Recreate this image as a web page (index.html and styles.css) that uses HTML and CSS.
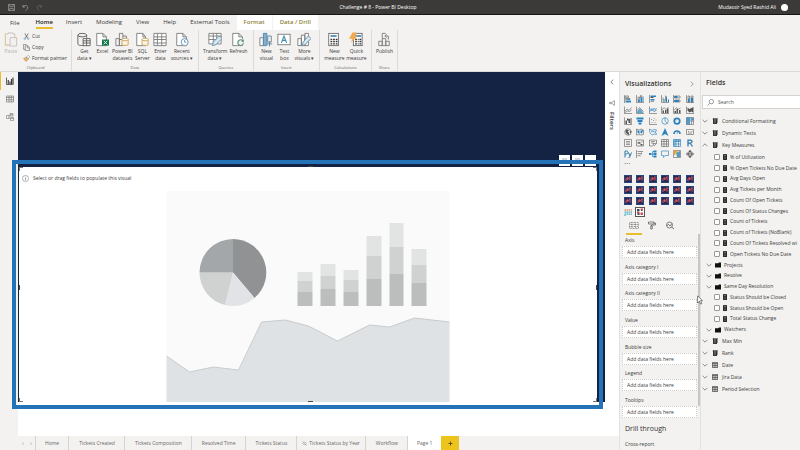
FILE: index.html
```html
<!DOCTYPE html>
<html lang="en">
<head>
<meta charset="utf-8">
<title>Challenge # 8 - Power BI Desktop</title>
<link rel="stylesheet" href="styles.css">
</head>
<body>
<svg class="defs" aria-hidden="true">
  <symbol id="calc" viewBox="0 0 10 12"><rect x="1" width="8" height="12" rx="1" fill="#2b2a29"/><path d="M3 2.5h4M3 6h1M6 6h1M3 9h1M6 9h1" stroke="#d8d6d4" stroke-width="1"/></symbol>
  <symbol id="calcbig" viewBox="0 0 12 12"><path d="M2 1h8v11H2z" fill="#333"/><path d="M1 2h2V0h8v10" fill="none" stroke="#333"/><path d="M4 4h4M4 7h1M7 7h1M4 9.500h1M7 9.500h1" stroke="#e3e1df"/></symbol>
  <symbol id="table" viewBox="0 0 14 12"><rect x=".7" y=".7" width="12.600" height="10.600" fill="#eee" stroke="#2b2a29" stroke-width="1.400"/><path d="M1 2.500h12M1 7h12M5 2v10M9 2v10" stroke="#2b2a29" stroke-width="1.300"/></symbol>
  <symbol id="folder" viewBox="0 0 14 12"><path d="M0 2h8l1-2h5v12H0z" fill="#111"/></symbol>
  <symbol id="down" viewBox="0 0 10 10"><path d="M1 3l4 4 4-4" fill="none" stroke="#666" stroke-width="1.200"/></symbol>
  <symbol id="up" viewBox="0 0 10 10"><path d="M1 7l4-4 4 4" fill="none" stroke="#666" stroke-width="1.200"/></symbol>
  <symbol id="custom" viewBox="0 0 16 16"><rect width="16" height="16" fill="#25477d"/><rect x="2" y="2" width="12" height="12" fill="#26284f"/><path d="M4 12V7l3-2v5l3-4 2-3v8" fill="none" stroke="#d2525f" stroke-width="2"/></symbol>
</svg>

<header class="titlebar">
  <div class="quick">
    <svg viewBox="0 0 16 16"><path d="M1 1h14v14H1zM4 1v5h8V1M4 15v-5h8v5" fill="none" stroke="#aaa" stroke-width="1.500"/></svg>
    <svg viewBox="0 0 16 16"><path d="M2 2v5h5M2 7c4-6 12-4 11 2 0 3-3 4-5 6" fill="none" stroke="#aaa" stroke-width="1.500"/></svg>
    <svg viewBox="0 0 16 16"><path d="M13 2v5H8M13 7C9 1 2 3 3 9c0 3 3 4 5 6" fill="none" stroke="#6a6967" stroke-width="1.500"/></svg>
  </div>
  <h1>Challenge # 8 - Power BI Desktop</h1>
  <div class="user">Mudassir Syed Rashid Ali <span class="avatar"></span></div>
</header>

<nav class="menu">
  <a class="file" href="#">File</a><a class="active" href="#">Home</a><a href="#">Insert</a><a href="#">Modeling</a><a href="#">View</a><a href="#">Help</a><a href="#">External Tools</a><a class="context" href="#">Format</a><a class="context" href="#">Data / Drill</a>
</nav>

<section class="ribbon">
  <div class="group">
    <div class="tools clipboard">
      <button class="faded"><svg viewBox="0 0 14 16"><path d="M1 2h3V1h5v1h2v4M1 2v12h5M6 6h7v9H6z" fill="none" stroke="#c5c2bd"/><path d="M1 2v12h4" fill="none" stroke="#dfc99b"/></svg>Paste</button>
      <div class="stack">
        <button><svg viewBox="0 0 16 16"><path d="M4 1l7 11M12 1L5 12" fill="none" stroke="#444" stroke-width="1.500"/><circle cx="4" cy="13" r="2" fill="none" stroke="#4c87b5"/><circle cx="12" cy="13" r="2" fill="none" stroke="#4c87b5"/></svg>Cut</button>
        <button><svg viewBox="0 0 16 16"><path d="M5 12H1V1h6l2 2M5 4h6l4 4v7H5zM10 4v5h5" fill="none" stroke="#555" stroke-width="1.200"/></svg>Copy</button>
        <button><svg viewBox="0 0 16 16"><path d="M1 8l7-3 4 5-5 5z" fill="#e5b567" stroke="#9e7a45"/><path d="M8 5l4-4 3 3-3 5z" fill="#fff" stroke="#555"/></svg>Format painter</button>
      </div>
    </div>
    <h2>Clipboard</h2>
  </div>
  <div class="group">
    <div class="tools">
      <button class="s"><svg viewBox="0 0 16 16"><path d="M1 3v10c0 2 5 2 7 2M11 3v3" fill="none" stroke="#555"/><ellipse cx="6" cy="3" rx="5" ry="2" fill="none" stroke="#555"/><path d="M7 7h8v8H7zM7 9.500h8M7 12h8M11 7v8" fill="#fff" stroke="#555"/></svg>Get<br>data ▾</button>
      <button class="s"><svg viewBox="0 0 16 16"><path d="M2 1h7l4 4v10H2zM9 1v4h4" fill="#fff" stroke="#777"/><rect x="8" y="8" width="8" height="7" fill="#157a4b"/><path d="M10 9.500l4 4M14 9.500l-4 4" stroke="#fff"/></svg>Excel</button>
      <button class="m"><svg viewBox="0 0 16 16"><path d="M1 7h4v8H1zM5 1h4v7H5zM5 8h4v7H5zM9 4h4v5" fill="none" stroke="#777"/><path d="M8 8v6c1 1 6 1 7 0V8" fill="#fff4df" stroke="#c79b55"/><ellipse cx="11.500" cy="8" rx="3.500" ry="1.500" fill="#fff" stroke="#c79b55"/></svg>Power BI<br>datasets</button>
      <button class="s"><svg viewBox="0 0 16 16"><path d="M2 1h7l3 4v10H2zM9 1v4h3" fill="#fff" stroke="#777"/><path d="M8 8v6c1 1 6 1 7 0V8" fill="#fff4df" stroke="#c79b55"/><ellipse cx="11.500" cy="8" rx="3.500" ry="1.500" fill="#fff" stroke="#c79b55"/></svg>SQL<br>Server</button>
      <button class="s"><svg viewBox="0 0 16 16"><path d="M1 1h14v14H1zM1 5h14M1 8h14M1 12h14M5 1v14M10 1v14" fill="#fff" stroke="#777"/></svg>Enter<br>data</button>
      <button class="l"><svg viewBox="0 0 16 16"><path d="M2 1h7l4 4v10H2zM9 1v4h4" fill="#fff" stroke="#777"/><circle cx="11" cy="11" r="4" fill="#fff" stroke="#5d8cb8"/><path d="M11 8.500V11h2" fill="none" stroke="#5d8cb8"/></svg>Recent<br>sources ▾</button>
    </div>
    <h2>Data</h2>
  </div>
  <div class="group">
    <div class="tools">
      <button class="l"><svg viewBox="0 0 16 16"><path d="M1 1h14v12H1zM1 4h14M1 8h14M6 1v12M10 1v12" fill="#fff" stroke="#777"/><path d="M5 15l1-4 7-7 3 3-7 7z" fill="#d7e8f2" stroke="#5d8ca8"/></svg>Transform<br>data ▾</button>
      <button class="m"><svg viewBox="0 0 16 16"><path d="M2 1h7l4 4v10H2zM9 1v4h4" fill="#fff" stroke="#777"/><circle cx="11" cy="11" r="4" fill="#f3f2f0"/><path d="M8 13c-1-5 4-6 6-3V8M14 10h-2M14 12c0 3-4 4-6 1" fill="none" stroke="#56937a" stroke-width="1.200"/></svg>Refresh</button>
    </div>
    <h2>Queries</h2>
  </div>
  <div class="group">
    <div class="tools">
      <button class="s"><svg viewBox="0 0 16 16"><path d="M1 6h4v9H1z" fill="#fff" stroke="#777"/><path d="M5 1h4v14H5z" fill="#80afd0" stroke="#4e86ad"/><path d="M10 4h4v7h-4zM12 10v6M9 13h6" fill="none" stroke="#5f7f96"/></svg>New<br>visual</button>
      <button class="s"><svg viewBox="0 0 16 16"><rect x="1" y="2" width="14" height="12" fill="#fff" stroke="#777"/><path d="M5 12l3-8 3 8M6 9h4" fill="none" stroke="#3e8db0" stroke-width="1.200"/></svg>Text<br>box</button>
      <button class="m"><svg viewBox="0 0 16 16"><path d="M1 7h4v8H1zM5 3h4v12H5zM9 1h4v14H9z" fill="#fff" stroke="#777"/><path d="M6 15l1-4 6-7 3 3-7 7z" fill="#d7e8f2" stroke="#5d8ca8"/></svg>More<br>visuals ▾</button>
    </div>
    <h2>Insert</h2>
  </div>
  <div class="group">
    <div class="tools">
      <button class="m"><svg viewBox="0 0 16 16"><rect x="2" y="1" width="11" height="14" fill="#fff" stroke="#666"/><path d="M4 4h7" stroke="#4e8ab5" stroke-width="2"/><path d="M4 8h2M7 8h2M10 8h2M4 10.500h2M7 10.500h2M10 10.500h2M4 13h2M7 13h2M10 13h2" stroke="#333" stroke-width="1.500"/></svg>New<br>measure</button>
      <button class="m"><svg viewBox="0 0 16 16"><rect x="5" y="1" width="10" height="14" fill="#fff" stroke="#666"/><path d="M7 4h7" stroke="#4e8ab5" stroke-width="2"/><path d="M7 8h2M10 8h1M12 8h2M7 10.500h2M10 10.500h1M12 10.500h2M7 13h2M10 13h1M12 13h2" stroke="#333" stroke-width="1.500"/><path d="M4 0h5L7 4h3l-8 8 2-5H0z" fill="#f0a94c"/></svg>Quick<br>measure</button>
    </div>
    <h2>Calculations</h2>
  </div>
  <div class="group">
    <div class="tools">
      <button class="s"><svg viewBox="0 0 16 16"><path d="M2 10h4v5H2zM6 7h4v8H6zM10 10h4v5h-4zM6 7V1h4M13 8V4H9l2-2M9 4l2 2" fill="none" stroke="#777"/></svg>Publish</button>
    </div>
    <h2>Share</h2>
  </div>
</section>

<div class="workspace">
  <div class="editor">
    <div class="stage">
      <nav class="rail">
        <a class="active" href="#" aria-label="Report"><svg viewBox="0 0 16 16"><path d="M1 1v14h14" fill="none" stroke="#333" stroke-width="1.500"/><path d="M4.500 6v8M8 9v5M11 4v10M14 1v13" stroke="#333" stroke-width="2.200"/></svg></a>
        <a href="#" aria-label="Data"><svg viewBox="0 0 16 16"><path d="M1 2h14v12H1zM1 5h14M1 9.500h14M6 2v12M10.500 2v12" fill="none" stroke="#666" stroke-width="1.200"/></svg></a>
        <a href="#" aria-label="Model"><svg viewBox="0 0 16 16"><path d="M1 5h5v6H1zM8 1h6v5H8zM9 9h6v6H9zM6 7l2-3M6 9l3 3M8 3h6M9 11h6" fill="none" stroke="#777" stroke-width="1.200"/></svg></a>
      </nav>
      <main class="canvas">
        <div class="report">
          <article class="visual">
            <div class="actions"><i></i><i></i><i></i></div>
            <p><svg viewBox="0 0 16 16"><circle cx="8" cy="8" r="7" fill="none" stroke="#555"/><path d="M8 7v5M8 4v1.500" stroke="#555" stroke-width="1.300"/></svg>Select or drag fields to populate this visual</p>
            <svg class="art" viewBox="0 0 283 211">
              <rect width="283" height="211" fill="#fafafa"/>
              <path d="M0 165l23 16 24-5 25 3 23-48 24-2 23 6 29 15 32-16 20 2 25-9 35 4v80H0z" fill="#dfe2e4"/>
              <path d="M0 165l23 16 24-5 25 3 23-48 24-2 23 6 29 15 32-16 20 2 25-9 35 4" fill="none" stroke="#c9cbcc"/>
              <path d="M66.500 81.500v-33.500a33.500 33.500 0 0 1 21.500 59z" fill="#909294"/>
              <path d="M66.500 81.500L88 107a33.500 33.500 0 0 1-29.500 7z" fill="#e1e3e6"/>
              <path d="M66.500 81.500l-8 32.500A33.500 33.500 0 0 1 33 81.500z" fill="#d0d2d2"/>
              <path d="M66.500 81.500H33A33.500 33.500 0 0 1 66.500 48z" fill="#a4a7a9"/>
              <path d="M131 81h15v9h-15zM154 73h15v12h-15zM177 79h15v10h-15zM200 45h15v20h-15zM223 32h14v24h-14zM245 58h15v16h-15z" fill="#e2e3e3"/>
              <path d="M131 90h15v11h-15zM154 85h15v13h-15zM177 89h15v12h-15zM200 65h15v23h-15zM223 56h14v27h-14zM245 74h15v18h-15z" fill="#d0d2d1"/>
              <path d="M131 101h15v14h-15zM154 98h15v17h-15zM177 101h15v14h-15zM200 88h15v27h-15zM223 83h14v32h-14zM245 92h15v23h-15z" fill="#bcbdbd"/>
            </svg>
            <span class="grip t"></span><span class="grip b"></span><span class="grip w"></span><span class="grip e"></span>
            <span class="corner nw"></span><span class="corner ne"></span><span class="corner sw"></span><span class="corner se"></span>
            <span class="highlight"></span>
          </article>
        </div>
      </main>
      <aside class="filters">
        <svg viewBox="0 0 10 10"><path d="M7 1L3 5l4 4" fill="none" stroke="#555" stroke-width="1.200"/></svg>
        <svg viewBox="0 0 10 10"><path d="M9 1v8L5 6H1V4h4z" fill="none" stroke="#666"/></svg>
        <h2>Filters</h2>
      </aside>
    </div>
    <nav class="pages">
      <button class="step">‹</button><button class="step">›</button>
      <a href="#">Home</a><a href="#">Tickets Created</a><a href="#">Tickets Composition</a><a href="#">Resolved Time</a><a href="#">Tickets Status</a><a class="hidden-page" href="#"><svg viewBox="0 0 12 12"><path d="M1 6c2-4 8-4 10 0-2 4-8 4-10 0M1 1l10 10" fill="none" stroke="#777"/></svg>Tickets Status by Year</a><a href="#">Workflow</a><a class="active" href="#">Page 1</a><button class="add" aria-label="New page"><svg viewBox="0 0 10 10"><path d="M5 1v8M1 5h8" stroke="#5a4a10" stroke-width="1.800"/></svg></button>
    </nav>
  </div>

  <aside class="viz">
    <header><h2>Visualizations</h2><svg viewBox="0 0 10 10"><path d="M3 1l4 4-4 4" fill="none" stroke="#666"/></svg></header>
    <div class="gallery">
      <svg viewBox="0 0 16 16"><path class="g" d="M1 0v16M3 2h6v3H3zM3 7h9v2H3z"/><path class="f" d="M3 11h11v4H3zM7 7h5v2H7z"/></svg>
      <svg viewBox="0 0 16 16"><path class="g" d="M1 0v15h15M4 4h3v9H4zM9 1h2v5H9z"/><path class="f" d="M4 9h3v5H4zM9 6h3v8H9zM13 3h2v11h-2z"/></svg>
      <svg viewBox="0 0 16 16"><path class="g" d="M1 0v16M3 13h7"/><path class="f" d="M3 1h11v3H3zM3 8h8v3H3z"/><path class="d" d="M3 4h6v2H3z"/></svg>
      <svg viewBox="0 0 16 16"><path class="g" d="M1 0v15h15M4 5v8M9 1v12"/><path class="f" d="M5 8h2v6H5zM10 3h2v11h-2zM14 9h2v5h-2z"/></svg>
      <svg viewBox="0 0 16 16"><path class="g" d="M1 0v16M3 2h11v4H3zM3 10h11v4H3z"/><path class="f" d="M3 2h6v4H3zM3 10h9v4H3z"/></svg>
      <svg viewBox="0 0 16 16"><path class="g" d="M1 0v15h15M4 2h3v12H4zM10 2h4v12h-4z"/><path class="f" d="M4 7h3v7H4zM10 5h4v9h-4z"/></svg>

      <svg viewBox="0 0 16 16"><path class="g" d="M1 1v14h15M2 10l4-4 4 3 5-6M2 13l5-3 4 1 4-3"/></svg>
      <svg viewBox="0 0 16 16"><path class="g" d="M1 1v14h15M2 9l5-6 8 8"/><path class="f" d="M2 11l5-6 4 3 4 6H2z" opacity=".7"/></svg>
      <svg viewBox="0 0 16 16"><path class="g" d="M1 1v14h15"/><path class="b" d="M2 5l4 5 4-6 5 6M2 11l4-6 5 7 4-8"/></svg>
      <svg viewBox="0 0 16 16"><path class="g" d="M1 1v14h15M2 8l4-5 4 4 5-5"/><path class="d" d="M3 9h3v5H3zM8 8h3v6H8zM12 5h3v9h-3z"/></svg>
      <svg viewBox="0 0 16 16"><path class="g" d="M1 1v14h15M2 9l5-6 3 4 5-3"/><path class="d" d="M3 10h3v4H3zM7 6h3v8H7zM12 8h3v6h-3z"/></svg>
      <svg viewBox="0 0 16 16"><path class="g" d="M1 1v14h15"/><path class="d" d="M3 3l4 3 4-2 4-2v12l-4-3-4 2-4-4z"/></svg>

      <svg viewBox="0 0 16 16"><path class="g" d="M1 1v14h15"/><path class="d" d="M3 7h3v7H3zM6 3h3v4H6zM9 4h3v8H9zM13 2h2v12h-2z"/></svg>
      <svg viewBox="0 0 16 16"><path class="f" d="M1 1h14v4H1zM3 6h10v4H3zM5 11h6v4H5z"/></svg>
      <svg viewBox="0 0 16 16"><path class="g" d="M1 1v14h15M4 5h2M9 3h2M13 6h2M5 11h2M11 11h2M8 7h2"/></svg>
      <svg viewBox="0 0 16 16"><circle class="b" cx="8" cy="8" r="6.500"/><path class="b" d="M8 1v7l5 5"/></svg>
      <svg viewBox="0 0 16 16"><circle cx="8" cy="8" r="5.500" fill="none" stroke="#2b83bd" stroke-width="3.500"/><path class="g" d="M2 3l4 4"/></svg>
      <svg viewBox="0 0 16 16"><path class="g" d="M1 1h14v14H1zM8 8h7M11 8v7"/><path class="f" d="M1 1h7v14H1zM9 2h6v5H9z" opacity=".8"/></svg>

      <svg viewBox="0 0 16 16"><circle class="g" cx="8" cy="8" r="6.500"/><path class="d" d="M4 3l6 1-3 4 3 1v5l-4-2-3-4zM11 5l4 2-2 4z"/></svg>
      <svg viewBox="0 0 16 16"><path class="g" d="M1 2l5 2 4-2 5 2v9l-5 1-4-1-5 1z"/><path class="f" d="M3 4l4 2v6l-4-3zM9 5l5-1-2 7-3-1z"/></svg>
      <svg viewBox="0 0 16 16"><path class="b" d="M1 2l5 3 4-2 5 1-2 4 2 5-5-1-4 2-3-3-2-4zM4 8l4-1 5 1"/></svg>
      <svg viewBox="0 0 16 16"><path class="f" d="M8 0l7 16-7-4-7 4z"/></svg>
      <svg viewBox="0 0 16 16"><path d="M2 12a6 6 0 0 1 12 0" fill="none" stroke="#2b83bd" stroke-width="3"/><path class="g" d="M8 12l2-5"/></svg>
      <svg viewBox="0 0 16 16"><path class="g" d="M1 3h14v10H1zM4 7h2M8 7h1M11 7h2M4 10h8"/></svg>

      <svg viewBox="0 0 16 16"><path class="g" d="M1 1h14v14H1zM4 5h8M4 8h8M4 11h8"/></svg>
      <svg viewBox="0 0 16 16"><path class="g" d="M1 2h14v12H1zM3 6l4 4 6-6"/><path class="d" d="M3 9l3-4 3 4zM9 10h4v3H9z"/></svg>
      <svg viewBox="0 0 16 16"><path class="g" d="M1 2h14v7M1 2v12h7M4 5h8M4 8h5M8 9h7l-5 5z"/></svg>
      <svg viewBox="0 0 16 16"><path class="g" d="M1 1h14v14H1zM1 5h14M1 10h14M6 1v14M11 1v14"/></svg>
      <svg viewBox="0 0 16 16"><path class="f" d="M1 1h14v4H1zM1 5h4v10H1z" opacity=".5"/><path class="b" d="M1 1h14v14H1zM1 5h14M1 10h14M6 1v14M11 1v14"/></svg>
      <svg viewBox="0 0 16 16"><path d="M4 15V2h5c4 0 4 6 0 6H4M8 8l5 7" fill="none" stroke="#2b78ad" stroke-width="2.500"/></svg>

      <svg viewBox="0 0 16 16"><path d="M2 15V2h3c4 0 4 6 0 6H2M9 5l3 7M15 5l-4 10H9" fill="none" stroke="#2b78ad" stroke-width="2"/></svg>
      <svg viewBox="0 0 16 16"><path class="g" d="M1 0v16M3 3h11M3 7h7M3 11h4M11 5v4M8 9v4"/></svg>
      <svg viewBox="0 0 16 16"><path class="f" d="M0 6h5v4H0zM9 1h6v4H9zM9 6h6v4H9zM9 11h6v4H9z"/><path class="b" d="M5 8h4M7 3v10M7 3h3M7 13h3"/></svg>
      <svg viewBox="0 0 16 16"><path class="b" d="M1 2h14v9H8l-3 4v-4H1z"/></svg>
      <svg viewBox="0 0 16 16"><path class="g" d="M1 1h14v14H1z"/><path class="f" d="M6 5l8-3v12H8z" opacity=".8"/><path d="M1 1h8v5H5v4H1z" fill="#e5a34d"/></svg>
      <svg viewBox="0 0 16 16"><path d="M8 1l7 7-7 7-7-7zM8 1l-3 7 3 7 3-7zM1 8h14" fill="none" stroke="#333" stroke-width="1.300"/></svg>
    </div>
    <p class="more">···</p>
    <div class="gallery custom">
      <svg><use href="#custom"/></svg><svg><use href="#custom"/></svg><svg><use href="#custom"/></svg><svg><use href="#custom"/></svg><svg><use href="#custom"/></svg><svg><use href="#custom"/></svg>
      <svg><use href="#custom"/></svg><svg><use href="#custom"/></svg><svg><use href="#custom"/></svg><svg><use href="#custom"/></svg><svg><use href="#custom"/></svg><svg><use href="#custom"/></svg>
      <svg><use href="#custom"/></svg><svg><use href="#custom"/></svg><svg><use href="#custom"/></svg><svg><use href="#custom"/></svg><svg><use href="#custom"/></svg><svg><use href="#custom"/></svg>
      <svg viewBox="0 0 16 16"><path d="M1 4h3M5 4h3M9 4h3M13 4h3" stroke="#e0a070" stroke-width="3"/><path d="M1 8h3M5 8h3M9 8h3M13 8h3M1 12h3M5 12h3M9 12h3M13 12h3M2 14v2" stroke="#4bacc0" stroke-width="2.500"/></svg>
      <svg class="picked" viewBox="0 0 16 16"><rect width="16" height="16" fill="#fff"/><path d="M2 2h5v5H2zM10 3h3v3h-3zM3 10h4v4H3z" fill="#3d4250"/><path d="M9 1h5v3H9zM2 8h5v3H2zM9 9h5v5H9z" fill="#c94f55"/></svg>
    </div>
    <div class="modes">
      <button class="active" aria-label="Fields"><svg viewBox="0 0 20 16"><path d="M1 2h18v12H1zM1 6h18M1 10h18M6 2v12M13 2v12" fill="none" stroke="#444" stroke-dasharray="2 1"/></svg></button>
      <button aria-label="Format"><svg viewBox="0 0 20 16"><path d="M3 1h11v4H3zM14 3h3v4H9v2M7.500 9h3v6h-3z" fill="none" stroke="#444" stroke-width="1.300"/></svg></button>
      <button aria-label="Analytics"><svg viewBox="0 0 20 16"><circle cx="9" cy="7" r="6" fill="none" stroke="#444" stroke-width="1.300"/><path d="M13 11l5 4M4 8l3-2 3 3 4-5" fill="none" stroke="#444" stroke-width="1.500"/></svg></button>
    </div>
    <div class="wells">
      <div><h3 id="w1">Axis</h3><button aria-describedby="w1">Add data fields here</button></div>
      <div><h3 id="w2">Axis category I</h3><button aria-describedby="w2">Add data fields here</button></div>
      <div><h3 id="w3">Axis category II</h3><button aria-describedby="w3">Add data fields here</button></div>
      <div><h3 id="w4">Value</h3><button aria-describedby="w4">Add data fields here</button></div>
      <div><h3 id="w5">Bubble size</h3><button aria-describedby="w5">Add data fields here</button></div>
      <div><h3 id="w6">Legend</h3><button aria-describedby="w6">Add data fields here</button></div>
      <div><h3 id="w7">Tooltips</h3><button aria-describedby="w7">Add data fields here</button></div>
    </div>
    <div class="drill"><h2>Drill through</h2><p>Cross-report</p></div>
    <span class="scrollbar"></span>
    <svg class="cursor" viewBox="0 0 10 16"><path d="M1 1v12l3-3 2 5 2-1-2-5h3z" fill="#fff" stroke="#333"/></svg>
  </aside>

  <aside class="fields">
    <h2>Fields</h2>
    <label class="search"><svg viewBox="0 0 16 16"><circle cx="10" cy="6" r="5" fill="none" stroke="#555" stroke-width="1.300"/><path d="M6 10l-5 5" stroke="#555" stroke-width="1.300"/></svg><input type="text" placeholder="Search" aria-label="Search"></label>
    <div class="tree">
      <div class="row"><svg><use href="#down"/></svg><svg><use href="#calcbig"/></svg>Conditional Formatting</div>
      <div class="row"><svg><use href="#down"/></svg><svg><use href="#calcbig"/></svg>Dynamic Texts</div>
      <div class="row"><svg><use href="#up"/></svg><svg><use href="#calcbig"/></svg>Key Measures</div>
      <div class="nested">
        <label><input type="checkbox"><svg><use href="#calc"/></svg>% of Utilization</label>
        <label><input type="checkbox"><svg><use href="#calc"/></svg>% Open Tickets No Due Date</label>
        <label><input type="checkbox"><svg><use href="#calc"/></svg>Avg Days Open</label>
        <label><input type="checkbox"><svg><use href="#calc"/></svg>Avg Tickets per Month</label>
        <label><input type="checkbox"><svg><use href="#calc"/></svg>Count Of Open Tickets</label>
        <label><input type="checkbox"><svg><use href="#calc"/></svg>Count Of Status Changes</label>
        <label><input type="checkbox"><svg><use href="#calc"/></svg>Count of Tickets</label>
        <label><input type="checkbox"><svg><use href="#calc"/></svg>Count of Tickets (NoBlank)</label>
        <label><input type="checkbox"><svg><use href="#calc"/></svg>Count Of Tickets Resolved wi</label>
        <label><input type="checkbox"><svg><use href="#calc"/></svg>Open Tickets No Due Date</label>
        <div class="folder"><svg><use href="#down"/></svg><svg><use href="#folder"/></svg>Projects</div>
        <div class="folder"><svg><use href="#down"/></svg><svg><use href="#folder"/></svg>Resolve</div>
        <div class="folder"><svg><use href="#down"/></svg><svg><use href="#folder"/></svg>Same Day Resolution</div>
        <label><input type="checkbox"><svg><use href="#calc"/></svg>Status Should be Closed</label>
        <label><input type="checkbox"><svg><use href="#calc"/></svg>Status Should be Open</label>
        <label><input type="checkbox"><svg><use href="#calc"/></svg>Total Status Change</label>
        <div class="folder"><svg><use href="#down"/></svg><svg><use href="#folder"/></svg>Watchers</div>
      </div>
      <div class="row"><svg><use href="#down"/></svg><svg><use href="#calcbig"/></svg>Max Min</div>
      <div class="row"><svg><use href="#down"/></svg><svg><use href="#calcbig"/></svg>Rank</div>
      <div class="row"><svg><use href="#down"/></svg><svg><use href="#table"/></svg>Date</div>
      <div class="row"><svg><use href="#down"/></svg><svg><use href="#table"/></svg>Jira Data</div>
      <div class="row"><svg><use href="#down"/></svg><svg><use href="#table"/></svg>Period Selection</div>
    </div>
  </aside>
</div>
</body>
</html>
```
FILE: styles.css
```css
* { box-sizing: border-box; margin: 0; padding: 0; }
body {
  display: flex;
  flex-direction: column;
  height: 100vh;
  overflow: hidden;
  background: #f3f2f0;
  color: #3a3a3a;
  font: 5px/7px "Open Sans", "Noto Sans", sans-serif;
}
button, input { font: inherit; color: inherit; background: none; border: 0; }
a { color: inherit; text-decoration: none; }
svg { display: block; flex: none; }
h2, h3 { font-weight: 400; }
.defs { position: absolute; width: 0; height: 0; }

/* Title bar */
.titlebar {
  display: grid;
  grid-template-columns: 1fr auto 1fr;
  align-items: center;
  height: 15px;
  padding: 0 12px 0 8px;
  background: #3b3a38;
  border-bottom: 1px solid #161514;
  color: #fff;
}
.titlebar h1 { font-size: 5px; font-weight: 400; margin-right: 40px; }
.quick { display: flex; gap: 7px; }
.quick svg { width: 7px; height: 7px; }
.user { display: flex; justify-content: flex-end; align-items: center; gap: 5px; }
.avatar { width: 7px; height: 7px; border-radius: 50%; background: #fff; }

/* Ribbon tabs */
.menu { display: flex; height: 15px; padding-left: 3px; font-size: 6px; line-height: 14px; }
.menu a { padding: 0 7px; }
.menu .file { padding-right: 9px; line-height: 16px; }
.menu .active { padding-right: 6px; font-weight: 600; color: #222; }
.menu .active::after { content: ""; display: block; height: 2px; margin-top: -2px; background: #e9bd2e; }
.menu .context { background: #fff; color: #8d8437; font-weight: 600; border-right: 1px solid #f3f2f0; }

/* Ribbon */
.ribbon { display: flex; height: 42px; border-bottom: 1px solid #dcdad8; }
.group {
  display: flex;
  flex-direction: column;
  justify-content: space-between;
  padding: 2px 4px 0;
  border-right: 1px solid #dddbd8;
}
.group h2 { font-size: 4px; line-height: 7px; text-align: center; color: #666; }
.tools { display: flex; justify-content: center; align-items: flex-start; gap: 1px; }
.tools button { white-space: nowrap; display: block; line-height: 7px; }
.tools > button svg { width: 14px; height: 15px; margin: 0 auto 1px; }
.s { width: 17px; }
.m { width: 21px; }
.l { width: 24px; }
.clipboard { gap: 5px; }
.faded { color: #b5b2ae; }
.stack { display: flex; flex-direction: column; gap: 3px; }
.stack button { display: flex; align-items: center; gap: 2px; line-height: 8px; }
.stack svg { width: 7px; height: 7px; }

/* Workspace */
.workspace { display: flex; flex: 1; min-height: 0; }
.editor { display: flex; flex-direction: column; flex: 1; min-width: 0; }
.stage { display: flex; flex: 1; min-height: 0; }
.rail { width: 18px; }
.rail a { display: grid; place-items: center; height: 18px; border-left: 1px solid transparent; }
.rail .active { border-color: #e9bd2e; }
.rail svg { width: 8px; height: 8px; }
.canvas { display: flex; flex: 1; padding-bottom: 34px; background: #fff; }
.report { display: flex; flex: 1; padding: 95px 8px 0 1px; background: #142344; }
.visual { position: relative; display: flex; flex-direction: column; flex: 1; background: #fff; }
.visual p { display: flex; align-items: center; gap: 4px; height: 24px; padding: 0 0 2px 3px; }
.visual p svg { width: 7px; height: 7px; }
.art { flex: 1; min-height: 0; width: 100%; }
.highlight { position: absolute; inset: -7px -6px -7px -7px; border: 4px solid #2472b8; }
.actions { position: absolute; top: -12px; right: 1px; display: flex; gap: 2px; }
.actions i { width: 11px; height: 11px; border: 3px solid #fff; background: #cdd5e0; }
.actions i:last-child { background: #fff; }
.grip { position: absolute; background: #444; }
.t, .b { left: 50%; width: 5px; height: 1px; }
.t { top: -1px; }
.b { bottom: 0; }
.w, .e { top: 50%; width: 1px; height: 5px; }
.w { left: 0; }
.e { right: 0; }
.corner { position: absolute; width: 4px; height: 4px; border: 0 solid #777; }
.nw { top: 0; left: 0; border-width: 1px 0 0 1px; }
.ne { top: 0; right: 0; border-width: 1px 1px 0 0; }
.sw { bottom: 0; left: 0; border-width: 0 0 1px 1px; }
.se { bottom: 0; right: 0; border-width: 0 1px 1px 0; }

.filters { display: flex; flex-direction: column; align-items: center; width: 14px; padding-top: 7px; background: #fff; }
.filters svg { width: 6px; height: 6px; }
.filters svg + svg { margin-top: 15px; }
.filters h2 { writing-mode: vertical-rl; margin-top: 6px; font-size: 6px; line-height: 8px; font-weight: 600; color: #333; }

/* Page tabs */
.pages { display: flex; height: 14px; padding-left: 19px; line-height: 15px; color: #666; }
.pages a { display: flex; align-items: center; gap: 2px; padding: 0 9px 0 10px; border-right: 1px solid #d5d3d0; white-space: nowrap; }
.pages .step { width: 8px; }
.pages .step + a { padding-left: 9px; border-left: 1px solid #d5d3d0; }
.pages .hidden-page { padding: 0 5px; }
.pages svg { width: 5px; height: 5px; }
.pages .active { padding: 0 9px; background: #fff; border: 0; }
.add { display: grid; place-items: center; width: 18px; background: #ecc41b; }

/* Visualizations */
.viz { position: relative; display: flex; flex-direction: column; width: 82px; border: 1px solid #e3e1df; border-width: 0 1px; }
.viz header { display: flex; justify-content: space-between; align-items: center; padding: 6px 5px 0; height: 17px; }
.viz header svg { width: 6px; height: 6px; }
.viz h2, .fields h2 { font-size: 7px; line-height: 10px; color: #333; }
.viz header h2, .fields h2 { font-weight: 600; }
.gallery { display: grid; grid-template-columns: repeat(6, 1fr); grid-auto-rows: 11px; place-items: center; margin-top: 4px; padding: 0 4px 0 2px; }
.gallery svg { width: 8px; height: 8px; }
.g, .b { fill: none; stroke: #666; stroke-width: 1.300px; }
.gallery .b { stroke: #2b83bd; }
.f { fill: #2b83bd; }
.d { fill: #555; }
.more { padding-left: 4px; font-size: 8px; }
.gallery.custom { margin-top: 7px; }
.gallery .picked { width: 10px; height: 10px; border: 1px solid #555; }
.modes { display: flex; gap: 2px; height: 17px; margin-top: 1px; padding-left: 6px; }
.modes button { display: grid; place-items: center; width: 16px; border-bottom: 2px solid transparent; }
.modes .active { border-color: #e9bd2e; }
.modes svg { width: 10px; height: 9px; }
.wells { display: flex; flex-direction: column; justify-content: space-between; flex: 1; min-height: 0; padding: 1px 3px 0 2px; }
.wells h3 { font-size: 5px; line-height: 8px; padding-left: 3px; }
.wells button { display: block; width: 100%; margin-top: 2px; padding: 0 4px; border: 1px dotted #cfcdca; background: #fff; line-height: 10px; text-align: left; }
.drill { padding: 6px 0 2px 5px; }
.drill p { margin-top: 6px; line-height: 8px; }
.scrollbar { position: absolute; top: 162px; bottom: 44px; right: 0; width: 2px; background: #c8c6c4; }
.cursor { position: absolute; top: 223px; right: -3px; width: 6px; height: 10px; }

/* Fields */
.fields { display: flex; flex-direction: column; width: 99px; padding-bottom: 55px; overflow: hidden; white-space: nowrap; }
.fields h2 { padding: 6px 5px 0; height: 23px; }
.search { display: flex; align-items: center; gap: 4px; height: 14px; margin-left: 1px; padding-left: 4px; border: 1px solid #d5d3d0; border-right: 0; background: #fff; }
.search svg { width: 7px; height: 7px; }
.search input { flex: 1; min-width: 0; outline: 0; }
.search input::placeholder { color: #555; opacity: 1; }
.tree { display: flex; flex-direction: column; flex: 1; min-height: 0; padding-top: 6px; }
.row { display: flex; align-items: center; gap: 4px; height: 12px; padding-left: 1px; }
.tree svg { width: 6px; height: 6px; }
.nested { display: grid; grid-auto-rows: 1fr; flex: 1; padding-top: 1px; }
.nested label, .folder { display: flex; align-items: center; gap: 2px; min-height: 0; }
.nested label { padding-left: 13px; }
.folder { gap: 3px; padding-left: 5px; }
.nested input { appearance: none; width: 6px; height: 6px; border: 1px solid #999; border-radius: 1px; background: #fff; }
```
